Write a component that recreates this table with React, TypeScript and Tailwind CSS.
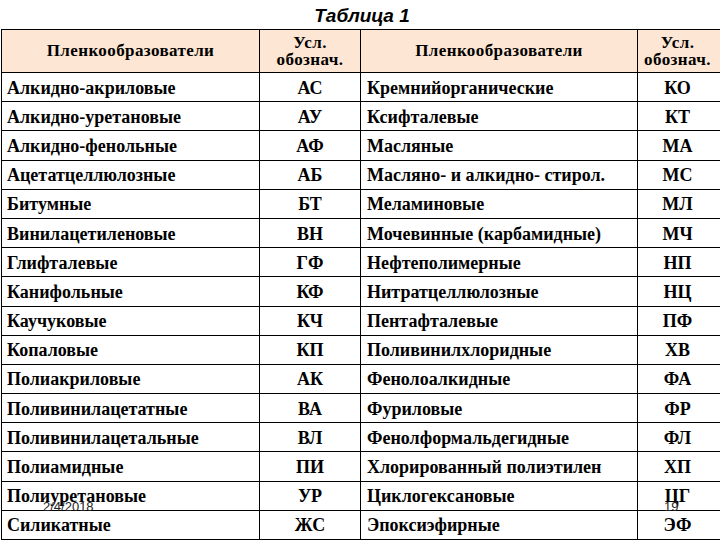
const rows: [string, string, string, string][] = [
  ['Алкидно-акриловые', 'АС', 'Кремнийорганические', 'КО'],
  ['Алкидно-уретановые', 'АУ', 'Ксифталевые', 'КТ'],
  ['Алкидно-фенольные', 'АФ', 'Масляные', 'МА'],
  ['Ацетатцеллюлозные', 'АБ', 'Масляно- и алкидно- стирол.', 'МС'],
  ['Битумные', 'БТ', 'Меламиновые', 'МЛ'],
  ['Винилацетиленовые', 'ВН', 'Мочевинные (карбамидные)', 'МЧ'],
  ['Глифталевые', 'ГФ', 'Нефтеполимерные', 'НП'],
  ['Канифольные', 'КФ', 'Нитратцеллюлозные', 'НЦ'],
  ['Каучуковые', 'КЧ', 'Пентафталевые', 'ПФ'],
  ['Копаловые', 'КП', 'Поливинилхлоридные', 'ХВ'],
  ['Полиакриловые', 'АК', 'Фенолоалкидные', 'ФА'],
  ['Поливинилацетатные', 'ВА', 'Фуриловые', 'ФР'],
  ['Поливинилацетальные', 'ВЛ', 'Фенолформальдегидные', 'ФЛ'],
  ['Полиамидные', 'ПИ', 'Хлорированный полиэтилен', 'ХП'],
  ['Полиуретановые', 'УР', 'Циклогексановые', 'ЦГ'],
  ['Силикатные', 'ЖС', 'Эпоксиэфирные', 'ЭФ'],
]

const cell = 'border-r border-b border-black h-[29.2px] flex items-center'
const head = 'border-r border-b border-black h-[43px] flex items-center justify-center bg-[#fde6d3] text-[17px] tracking-[0.4px]'

export default function App() {
  return (
    <div className="relative w-[720px] h-[540px] overflow-hidden bg-white text-black font-['Liberation_Serif','Times_New_Roman',serif]">
      <div className="h-[29px] flex items-end justify-center pb-[4px] pl-[4px] font-['Liberation_Sans',Arial,sans-serif] font-bold italic text-[19px] leading-none">
        Таблица 1
      </div>

      <div className="ml-[1px] w-[722px] border-t border-l border-black grid grid-cols-[258px_101px_277px_86px] font-bold text-[18px]">
        <div className={head}>Пленкообразователи</div>
        <div className={`${head} leading-[17px] text-center`}>
          Усл.<br />обознач.
        </div>
        <div className={head}>Пленкообразователи</div>
        <div className={`${head} leading-[17px] text-center pr-[6px]`}>
          Усл.<br />обознач.
        </div>

        {rows.map(([a, b, c, d]) => (
          <div key={a} className="contents">
            <div className={`${cell} pl-[5px] pt-[2px]`}>{a}</div>
            <div className={`${cell} justify-center pt-[2px]`}>{b}</div>
            <div className={`${cell} pl-[6px] pt-[2px]`}>{c}</div>
            <div className={`${cell} justify-center pr-[6px] pt-[2px]`}>{d}</div>
          </div>
        ))}
      </div>

      {/* slide footer */}
      <div className="absolute left-[43px] top-[500px] text-[13px] leading-none text-[#222] font-['Liberation_Sans',Arial,sans-serif]">
        2/4/2018
      </div>
      <div className="absolute left-[664px] top-[500px] text-[13px] leading-none text-[#222] font-['Liberation_Sans',Arial,sans-serif]">
        19
      </div>
    </div>
  )
}
